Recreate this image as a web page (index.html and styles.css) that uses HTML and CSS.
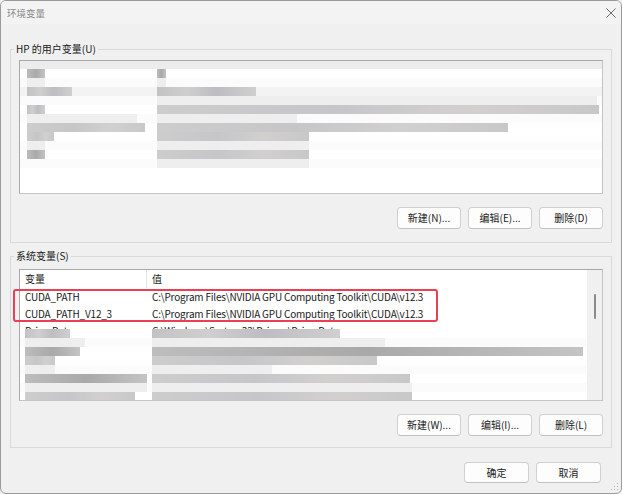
FILE: index.html
```html
<!DOCTYPE html>
<html lang="zh-CN">
<head>
<meta charset="utf-8">
<title>环境变量</title>
<link rel="stylesheet" href="styles.css">
</head>
<body>
<div class="window">
  <div class="titlebar">
    <span class="title">环境变量</span>
    <svg class="close" width="10" height="10" viewBox="0 0 10 10"><path d="M0.5 0.5 L9.5 9.5 M9.5 0.5 L0.5 9.5" stroke="#6b6b6b" stroke-width="1"/></svg>
  </div>
  <div class="body">
    <fieldset class="group group-user">
      <legend>HP 的用户变量(U)</legend>
      <div class="list list-user">
        <div class="mz band"></div>
        <div class="mz"><span class="m1"><i class="d2" style="width:18px"></i></span><span class="m2"><i class="d2" style="width:9px"></i></span></div>
        <div class="mz faint"><span class="m1"><i class="l1" style="width:18px"></i></span><span class="m2"><i class="l1" style="width:9px"></i></span></div>
        <div class="mz tint"><span class="m1"><i class="d1" style="width:45px"></i></span><span class="m2"><i class="d1" style="width:99px"></i></span></div>
        <div class="mz faint"><span class="m1"></span><span class="m2"><i class="l1" style="width:440px"></i></span></div>
        <div class="mz"><span class="m1"><i class="d1" style="width:18px"></i></span><span class="m2"><i class="d3" style="width:442px"></i></span></div>
        <div class="mz faint"><span class="m1"><i class="l1" style="width:110px"></i></span><span class="m2"><i class="l1" style="width:140px"></i></span></div>
        <div class="mz"><span class="m1"><i class="d3" style="width:118px"></i></span><span class="m2"><i class="d3" style="width:351px"></i></span></div>
        <div class="mz"><span class="m1"><i class="d3" style="width:27px"></i></span><span class="m2"><i class="d3" style="width:152px"></i></span></div>
        <div class="mz faint"><span class="m1"><i class="l1" style="width:18px"></i></span><span class="m2"><i class="l1" style="width:152px"></i></span></div>
        <div class="mz"><span class="m1"><i class="d2" style="width:18px"></i></span><span class="m2"><i class="d3" style="width:152px"></i></span></div>
        <div class="mz faint"><span class="m1"></span><span class="m2"><i class="l1" style="width:152px"></i></span></div>
      </div>
      <div class="btnrow">
        <button class="btn">新建(N)...</button>
        <button class="btn">编辑(E)...</button>
        <button class="btn">删除(D)</button>
      </div>
    </fieldset>
    <fieldset class="group group-sys">
      <legend>系统变量(S)</legend>
      <div class="list list-sys">
        <div class="lv">
          <div class="lv-header"><div class="c1 hdr">变量</div><div class="c2">值</div></div>
          <div class="lv-row"><div class="c1">CUDA_PATH</div><div class="c2">C:\Program Files\NVIDIA GPU Computing Toolkit\CUDA\v12.3</div></div>
          <div class="lv-row"><div class="c1">CUDA_PATH_V12_3</div><div class="c2">C:\Program Files\NVIDIA GPU Computing Toolkit\CUDA\v12.3</div></div>
          <div class="lv-row clip"><div class="c1">DriverData</div><div class="c2">C:\Windows\System32\Drivers\DriverData</div></div>
          <div class="mz sys"><span class="m1"><i class="d1" style="width:45px"></i></span><span class="m2"><i class="d1" style="width:188px"></i></span></div>
          <div class="mz sys faint"><span class="m1"><i class="l1" style="width:60px"></i></span><span class="m2"><i class="l1" style="width:233px"></i></span></div>
          <div class="mz sys"><span class="m1"><i class="d2" style="width:55px"></i></span><span class="m2"><i class="d2" style="width:431px"></i></span></div>
          <div class="mz sys"><span class="m1"><i class="d3" style="width:30px"></i></span><span class="m2"><i class="d3" style="width:225px"></i></span></div>
          <div class="mz sys faint"><span class="m1"><i class="l1" style="width:30px"></i></span><span class="m2"><i class="l1" style="width:120px"></i></span></div>
          <div class="mz sys"><span class="m1"><i class="d2" style="width:122px"></i></span><span class="m2"><i class="d3" style="width:258px"></i></span></div>
          <div class="mz sys faint"><span class="m1"><i class="l1" style="width:122px"></i></span><span class="m2"><i class="l1" style="width:260px"></i></span></div>
          <div class="mz sys"><span class="m1"><i class="d3" style="width:110px"></i></span><span class="m2"><i class="d3" style="width:260px"></i></span></div>
        </div>
        <div class="vscroll"><div class="thumb"></div></div>
        <div class="highlight"></div>
      </div>
      <div class="btnrow">
        <button class="btn">新建(W)...</button>
        <button class="btn">编辑(I)...</button>
        <button class="btn">删除(L)</button>
      </div>
    </fieldset>
    <div class="footer">
      <button class="btn">确定</button>
      <button class="btn">取消</button>
    </div>
  </div>
  <svg class="grip" width="8" height="8" viewBox="0 0 8 8"><g fill="#b5b5b5"><rect x="6" y="0" width="1" height="1"/><rect x="3" y="3" width="1" height="1"/><rect x="6" y="3" width="1" height="1"/><rect x="0" y="6" width="1" height="1"/><rect x="3" y="6" width="1" height="1"/><rect x="6" y="6" width="1" height="1"/></g></svg>
</div>
</body>
</html>
```

FILE: styles.css
```css
* { box-sizing: border-box; }
html, body { margin: 0; padding: 0; background: #f0f0f0; }
body {
  font-family: "Noto Sans CJK SC", "Noto Sans", sans-serif;
  font-size: 10px;
  color: #1a1a1a;
}
.window {
  width: 622px;
  height: 494px;
  border: 1px solid #9a9a9a;
  border-radius: 6px;
  background: #f0f0f0;
  display: flex;
  flex-direction: column;
  overflow: hidden;
  position: relative;
}
.titlebar {
  height: 23px;
  flex: none;
  display: flex;
  align-items: center;
  justify-content: space-between;
  padding: 0 5px 0 6px;
  background: #f3f3f3;
}
.title { color: #8a8a8a; font-size: 9.5px; line-height: 14px; }
.close { display: block; }
.body {
  padding: 17px 9px 0 9px;
  display: flex;
  flex-direction: column;
}
.group {
  margin: 0;
  border: 1px solid #dadada;
  padding: 3px 8px 13px 8px;
  min-width: 0;
}
.group legend {
  padding: 0 2px;
  margin-left: -5px;
  line-height: 16px;
  font-size: 10px;
  color: #1a1a1a;
}
.group-sys { margin-top: 5px; padding-top: 5px; padding-bottom: 11px; }
.list {
  background: #fff;
  border: 1px solid #c4c4c4;
  border-top-color: #a9a9a9;
  border-left-color: #a9a9a9;
  position: relative;
}
.list-user { height: 134px; }
.list-sys { height: 132px; display: flex; }
.lv { flex: 1; min-width: 0; overflow: hidden; }
.lv-header, .lv-row { display: flex; height: 17px; line-height: 17px; white-space: nowrap; letter-spacing: -0.2px; }
.lv-header { height: 18px; line-height: 18px; letter-spacing: 0; }
.c1 { width: 127px; padding-left: 5px; flex: none; }
.c2 { padding-left: 5px; }
.hdr { border-right: 1px solid #e5e5e5; }
.clip { height: 7px; overflow: hidden; }
.vscroll {
  width: 15px;
  flex: none;
  background: #f0f0f0;
  display: flex;
  justify-content: center;
  padding-top: 24px;
}
.thumb { width: 2px; height: 25px; background: #8b8b8b; border-radius: 1px; }
.highlight {
  position: absolute;
  left: -7px;
  top: 19px;
  width: 425px;
  height: 33px;
  border: 2px solid #ea3f55;
  border-radius: 3px;
}
/* pixelated (blurred) rows */
.mz { display: flex; height: 9px; }
.mz .m1 { width: 132px; flex: none; padding-left: 7px; display: flex; }
.mz.sys .m1 { width: 127px; padding-left: 5px; }
.mz .m2 { flex: 1; padding-left: 5px; display: flex; }
.mz i { display: block; height: 100%; flex: none; }
.mz.sys { height: 9px; }
.band { height: 8px; background: #ececec; }
.faint { background: #fbfbfb; }
.tint { background: #f3f3f3; }
.d1 { background: linear-gradient(90deg, #c2c2c2, #cfcfcf 30%, #bdbdc2 60%, #d0cfcf); }
.d2 { background: linear-gradient(90deg, #bdbdbd, #a9a9a9 50%, #c4c4c4); }
.d3 { background: linear-gradient(90deg, #cdcdcd, #c6c6c9 40%, #d2d0cf 70%, #c8c8c8); }
.l1 { background: #eeeeee; }
.btnrow {
  display: flex;
  justify-content: flex-end;
  gap: 7px;
  margin-top: 13px;
}
.btn {
  width: 64px;
  height: 22px;
  padding: 0;
  border: 1px solid #d0d0d0;
  border-bottom-color: #c2c2c2;
  border-radius: 4px;
  background: #fdfdfd;
  font-family: "Noto Sans CJK SC", sans-serif;
  font-size: 10px;
  color: #1a1a1a;
  line-height: 20px;
}
.footer {
  display: flex;
  justify-content: flex-end;
  gap: 7px;
  margin-top: 14px;
  padding-right: 11px;
}
.footer .btn { width: 65px; height: 21px; }
.grip { position: absolute; right: 2px; bottom: 2px; }
```
